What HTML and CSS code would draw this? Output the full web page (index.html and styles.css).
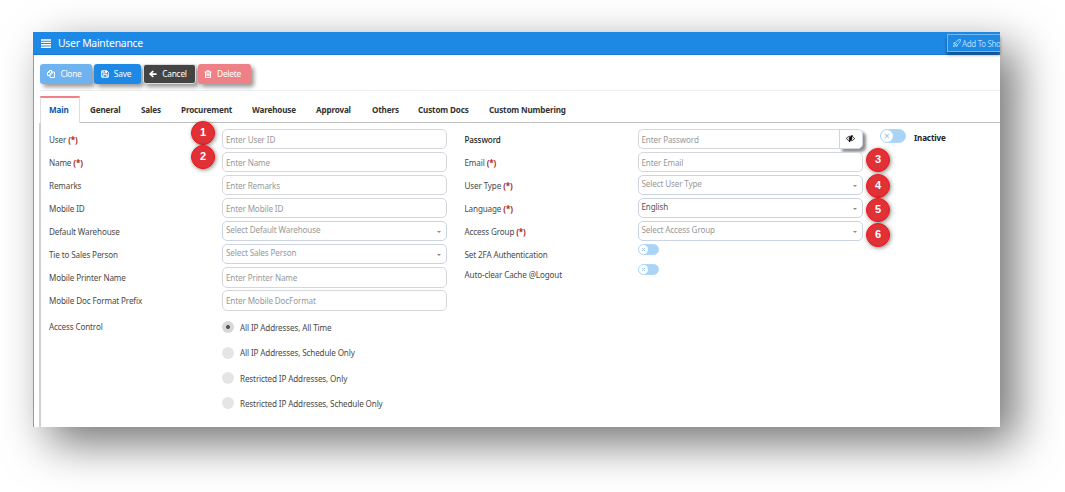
FILE: index.html
```
<!DOCTYPE html>
<html lang="en">
<head>
    <meta charset="UTF-8">
    <meta name="viewport" content="width=device-width, initial-scale=1.0">
    <title>User Maintenance</title>
    <link rel="stylesheet" href="styles.css">
</head>
<body>
    <div class="window">
        <header class="titlebar">
            <svg class="menu-icon" viewBox="0 0 10 9"><path d="M0 1h10M0 3.4h10M0 5.8h10M0 8.2h10"/></svg>
            <h1>User Maintenance</h1>
            <button class="shortcut">
                <svg viewBox="0 0 16 16"><path d="M15 1C10 1 7 4 5 7L2 7.500 1 10l3 0 2 2v3l2.500-1 .500-3c3-2 6-5 6-10zM10 5l1 1M2 12l-1 3 3-1M6 8l2 2"/></svg>
                <span>Add To Sho</span>
            </button>
        </header>

        <div class="toolbar">
            <button class="btn clone">
                <svg viewBox="0 0 16 16"><path d="M6 11H1V5l4-4h4v3M1 5h4V1M6 8l4-4h5v11H6zM6 8h4V4"/></svg>
                <span>Clone</span>
            </button>
            <button class="btn save">
                <svg viewBox="0 0 16 16"><path d="M1.500 1.500h10l3 3v10h-13zM4 2v4h7V2M4 14V9.500h8V14M9 2.500v2.500"/></svg>
                <span>Save</span>
            </button>
            <button class="btn cancel">
                <svg viewBox="0 0 16 16"><path class="thick" d="M15 8H3M8.500 2L2.500 8l6 6"/></svg>
                <span>Cancel</span>
            </button>
            <button class="btn delete">
                <svg viewBox="0 0 16 16"><path d="M1 4h14M5.500 4V1.500h5V4M3 4v11h10V4M6 6.500v6M8 6.500v6M10 6.500v6"/></svg>
                <span>Delete</span>
            </button>
        </div>

        <nav class="tabs">
            <a class="tab active"><span>Main</span></a>
            <a class="tab general"><span>General</span></a>
            <a class="tab sales"><span>Sales</span></a>
            <a class="tab procurement"><span>Procurement</span></a>
            <a class="tab warehouse"><span>Warehouse</span></a>
            <a class="tab approval"><span>Approval</span></a>
            <a class="tab others"><span>Others</span></a>
            <a class="tab docs"><span>Custom Docs</span></a>
            <a class="tab numbering"><span>Custom Numbering</span></a>
        </nav>

        <main class="content">
            <section class="column">
                <div class="row"><label>User <b>(*)</b></label><input type="text" placeholder="Enter User ID"></div>
                <div class="row"><label>Name <b>(*)</b></label><input type="text" placeholder="Enter Name"></div>
                <div class="row"><label>Remarks</label><input type="text" placeholder="Enter Remarks"></div>
                <div class="row"><label>Mobile ID</label><input type="text" placeholder="Enter Mobile ID"></div>
                <div class="row"><label>Default Warehouse</label><div class="select">Select Default Warehouse</div></div>
                <div class="row"><label>Tie to Sales Person</label><div class="select">Select Sales Person</div></div>
                <div class="row"><label>Mobile Printer Name</label><input type="text" placeholder="Enter Printer Name"></div>
                <div class="row"><label>Mobile Doc Format Prefix</label><input type="text" placeholder="Enter Mobile DocFormat"></div>
                <div class="row access">
                    <label>Access Control</label>
                    <div class="radios">
                        <div class="radio checked"><i></i><span>All IP Addresses, All Time</span></div>
                        <div class="radio"><i></i><span>All IP Addresses, Schedule Only</span></div>
                        <div class="radio"><i></i><span>Restricted IP Addresses, Only</span></div>
                        <div class="radio"><i></i><span>Restricted IP Addresses, Schedule Only</span></div>
                    </div>
                </div>
            </section>

            <section class="column">
                <div class="row">
                    <label class="strong">Password</label>
                    <div class="password">
                        <input type="text" placeholder="Enter Password">
                        <button class="eye">
                            <svg viewBox="0 0 18 14"><path class="lid" d="M1 7c4-6 12-6 16 0-4 6-12 6-16 0z"/><circle cx="9" cy="7" r="2.500"/><path class="slash" d="M12.500 0l-6 14"/></svg>
                        </button>
                    </div>
                </div>
                <div class="row"><label>Email <b>(*)</b></label><input type="text" placeholder="Enter Email"></div>
                <div class="row"><label>User Type <b>(*)</b></label><div class="select">Select User Type</div></div>
                <div class="row"><label>Language <b>(*)</b></label><div class="select filled">English</div></div>
                <div class="row"><label>Access Group <b>(*)</b></label><div class="select">Select Access Group</div></div>
                <div class="row toggle-row"><label>Set 2FA Authentication</label><div class="switch small"><svg viewBox="0 0 8 8"><path d="M1 1l6 6M7 1L1 7"/></svg></div></div>
                <div class="row toggle-row"><label>Auto-clear Cache @Logout</label><div class="switch small"><svg viewBox="0 0 8 8"><path d="M1 1l6 6M7 1L1 7"/></svg></div></div>
            </section>

            <section class="status">
                <div class="switch"><svg viewBox="0 0 8 8"><path d="M1 1l6 6M7 1L1 7"/></svg></div>
                <span>Inactive</span>
            </section>
        </main>
    </div>

    <!-- Numbered callouts over the form -->
    <span class="marker m1">1</span>
    <span class="marker m2">2</span>
    <span class="marker m3">3</span>
    <span class="marker m4">4</span>
    <span class="marker m5">5</span>
    <span class="marker m6">6</span>
</body>
</html>
```
FILE: styles.css
```
* {
    box-sizing: border-box;
}
body {
    margin: 0;
    height: 492px;
    padding: 32px 0 0 33px;
    background: #fff;
    overflow: hidden;
    position: relative;
    font-family: "Noto Sans", "Open Sans", sans-serif;
    font-size: 8.1px;
    letter-spacing: -0.13px;
    color: #4a4a4a;
}
button, input {
    font-family: inherit;
    font-size: inherit;
    letter-spacing: inherit;
}
svg {
    fill: none;
    stroke: currentColor;
    flex: none;
}
.window {
    width: 967px;
    height: 395px;
    background: #fff;
    border-left: 1px solid #5aa9ec;
    box-shadow: 16px 16px 42px rgba(0, 0, 0, 0.55);
    display: flex;
    flex-direction: column;
    white-space: nowrap;
}
.titlebar {
    height: 23px;
    margin-left: -1px;
    padding-left: 8px;
    background: #1e88e5;
    border-bottom: 1px solid #1976d2;
    color: #fff;
    display: flex;
    align-items: center;
    flex: none;
}
.menu-icon {
    width: 10px;
    height: 9px;
    stroke-width: 1.4;
}
.titlebar h1 {
    margin: 0 0 0 7px;
    font-size: 10.4px;
    font-weight: 400;
    letter-spacing: -0.25px;
}
.shortcut {
    width: 53px;
    height: 18px;
    margin: 0 0 0 auto;
    padding: 0 0 0 5px;
    display: flex;
    align-items: center;
    gap: 1px;
    flex: none;
    background: #1e88e5;
    border: 1px solid #74b8f3;
    border-right: 0;
    color: #b5dafb;
    font-size: 8px;
    letter-spacing: -0.35px;
    box-shadow: 0 3px 3px rgba(0, 0, 0, 0.4);
}
.shortcut svg {
    width: 8px;
    height: 8px;
    stroke-width: 2;
}
.toolbar {
    height: 36px;
    margin-left: 6px;
    padding-top: 9px;
    display: flex;
    gap: 2px;
    border-bottom: 1px solid #efefef;
    flex: none;
}
.btn {
    height: 20px;
    padding: 0 0 1px;
    border: 0;
    border-radius: 3px;
    display: flex;
    justify-content: center;
    align-items: center;
    gap: 5px;
    color: #fff;
    font-size: 8.4px;
    letter-spacing: -0.25px;
    box-shadow: 3px 3px 4px rgba(0, 0, 0, 0.4);
}
.btn svg {
    width: 8px;
    height: 8px;
    stroke-width: 2;
}
.btn .thick {
    stroke-width: 3.5;
}
.clone {
    width: 52px;
    padding-right: 3px;
    background: #6eb2ef;
}
.save {
    width: 47px;
    padding-right: 3px;
    background: #1e88e5;
}
.cancel {
    width: 53px;
    padding-right: 3px;
    background: #444;
    border: 1px solid #ddd;
}
.delete {
    width: 53px;
    padding-right: 4px;
    background: #ee8087;
}
.tabs {
    height: 32px;
    margin-left: 6px;
    padding-top: 5px;
    display: flex;
    border-bottom: 1px solid #bdbdbd;
    letter-spacing: -0.15px;
    flex: none;
}
.tab {
    height: 27px;
    padding: 0 0 1px 10px;
    display: flex;
    align-items: center;
    font-weight: 700;
    color: #333;
}
.tab.active {
    width: 40px;
    padding: 0 0 2px 8px;
    background: #fff;
    border: 1px solid #ddd;
    border-top: 2px solid #ef8086;
    border-bottom: 0;
    color: #0d56a6;
}
.general { width: 51px; }
.sales { width: 40px; }
.procurement { width: 71px; }
.warehouse { width: 64px; }
.approval { width: 56px; }
.others { width: 46px; }
.docs { width: 71px; }
.content {
    flex: 1;
    margin-left: 5px;
    padding: 5.5px 0 0 8px;
    border-left: 2px solid #d0d0d0;
    display: flex;
    gap: 17.5px;
}
.row {
    height: 23.1px;
    display: grid;
    grid-template-columns: 173px 225px;
}
.row label {
    line-height: 22px;
}
.row label b {
    color: #b0282c;
}
.row label.strong {
    font-weight: 500;
    color: #222;
}
.row input, .select {
    width: 225px;
    height: 20.500px;
    padding: 1px 0 0 3px;
    border: 1px solid #d5d7da;
    border-radius: 5px;
    background: #fff;
    color: #999;
    outline: none;
}
.row input::placeholder {
    color: #999;
}
.select {
    padding: 0 5px 0 3px;
    line-height: 16px;
    border-color: #ccd3e2;
    display: flex;
    justify-content: space-between;
}
.select::after {
    content: "";
    margin-top: 9px;
    width: 0;
    height: 0;
    border: 2px solid transparent;
    border-top-color: #888;
}
.select.filled {
    color: #555;
}
.password {
    display: flex;
}
.row .password input {
    width: 201px;
    border-radius: 5px 0 0 5px;
    border-right: 0;
}
.eye {
    width: 24px;
    height: 20.500px;
    padding: 0;
    display: flex;
    justify-content: center;
    align-items: center;
    background: #fff;
    border: 1px solid #ccd3e2;
    border-radius: 0 5px 5px 0;
    color: #000;
    box-shadow: 3px 3px 3px rgba(0, 0, 0, 0.45);
}
.eye svg {
    width: 9px;
    height: 7px;
    stroke-width: 1.8;
}
.eye circle {
    fill: #000;
}
.eye .slash {
    stroke-width: 2.2;
}
.row.access {
    height: auto;
    padding-top: 3px;
}
.radios {
    display: flex;
    flex-direction: column;
    gap: 3.4px;
}
.radio {
    height: 22px;
    display: flex;
    align-items: center;
    gap: 6px;
}
.radio i {
    width: 12px;
    height: 12px;
    border-radius: 50%;
    background: #e5e5e5;
}
.radio.checked i {
    background: radial-gradient(circle, #555 0 1.6px, #d8d8d8 2.3px);
}
.toggle-row {
    height: 19.900px;
}
.switch {
    width: 26px;
    height: 14px;
    border: 1px solid #b0d8f8;
    border-radius: 7px;
    background: #aad4f6;
    color: #8dc4ef;
}
.switch svg {
    display: block;
    width: 12px;
    height: 12px;
    padding: 3px;
    border-radius: 50%;
    background: #fff;
    stroke-width: 1.4;
}
.switch.small {
    width: 21px;
    height: 11px;
}
.switch.small svg {
    width: 9px;
    height: 9px;
    padding: 2px;
}
.status {
    display: flex;
    gap: 8px;
    color: #222;
    font-weight: 700;
}
.status span {
    line-height: 18px;
}
.marker {
    position: absolute;
    width: 24px;
    height: 24px;
    border: 1px solid #f51419;
    border-radius: 50%;
    background: #e03136;
    box-shadow: 1px 1px 4px rgba(0, 0, 0, 0.45);
    color: #fff;
    font: 700 11px/21px "Liberation Sans", sans-serif;
    text-align: center;
}
.m1 { left: 191px; top: 121px; }
.m2 { left: 191px; top: 145px; }
.m3 { left: 866px; top: 148px; }
.m4 { left: 866px; top: 174px; }
.m5 { left: 866px; top: 198px; }
.m6 { left: 866px; top: 223px; }
```
